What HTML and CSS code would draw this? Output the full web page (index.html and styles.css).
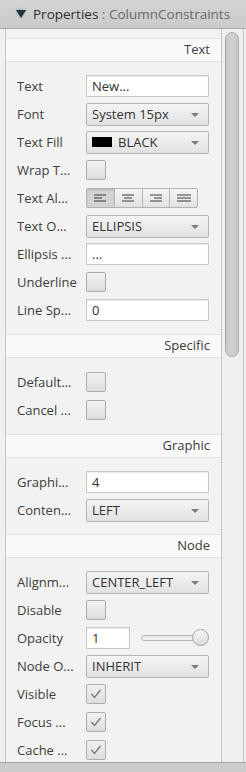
FILE: index.html
```html
<!DOCTYPE html>
<html>
<head>
<meta charset="utf-8">
<link rel="stylesheet" href="styles.css">
</head>
<body>
<div class="header">
  <svg class="tri" width="12" height="10" viewBox="0 0 12 10"><polygon points="1,1 11,1 6,9" fill="#2e2e2e"/></svg>
  <span class="title">Properties</span><span class="subtitle">&nbsp;: ColumnConstraints</span>
</div>
<div class="main">
  <div class="content">
    <div class="band">Text</div>
    <div class="body">
      <div class="row"><span class="lbl">Text</span><div class="field">New...</div></div>
      <div class="row"><span class="lbl">Font</span><div class="combo">System 15px<i class="arrow"></i></div></div>
      <div class="row"><span class="lbl">Text Fill</span><div class="combo"><span class="swatch"></span>BLACK<i class="arrow"></i></div></div>
      <div class="row"><span class="lbl">Wrap T...</span><div class="check"></div></div>
      <div class="row"><span class="lbl">Text Al...</span>
        <div class="seg">
          <div class="segbtn on"><svg width="12" height="8" viewBox="0 0 12 8"><path d="M0 1H12M0 4H8M0 7H12" stroke="#3a3a3a" stroke-width="1.1"/></svg></div>
          <div class="segbtn"><svg width="12" height="8" viewBox="0 0 12 8"><path d="M0 1H12M2 4H10M0 7H12" stroke="#3a3a3a" stroke-width="1.1"/></svg></div>
          <div class="segbtn"><svg width="12" height="8" viewBox="0 0 12 8"><path d="M0 1H12M4 4H12M0 7H12" stroke="#3a3a3a" stroke-width="1.1"/></svg></div>
          <div class="segbtn"><svg width="14" height="8" viewBox="0 0 14 8"><path d="M0 1H14M0 4H14M0 7H14" stroke="#3a3a3a" stroke-width="1.2"/></svg></div>
        </div>
      </div>
      <div class="row"><span class="lbl">Text O...</span><div class="combo">ELLIPSIS<i class="arrow"></i></div></div>
      <div class="row"><span class="lbl">Ellipsis ...</span><div class="field">...</div></div>
      <div class="row"><span class="lbl">Underline</span><div class="check"></div></div>
      <div class="row"><span class="lbl">Line Sp...</span><div class="field">0</div></div>
    </div>
    <div class="band">Specific</div>
    <div class="body">
      <div class="row"><span class="lbl">Default...</span><div class="check"></div></div>
      <div class="row"><span class="lbl">Cancel ...</span><div class="check"></div></div>
    </div>
    <div class="band">Graphic</div>
    <div class="body">
      <div class="row"><span class="lbl">Graphi...</span><div class="field">4</div></div>
      <div class="row"><span class="lbl">Conten...</span><div class="combo">LEFT<i class="arrow"></i></div></div>
    </div>
    <div class="band">Node</div>
    <div class="body">
      <div class="row"><span class="lbl">Alignm...</span><div class="combo">CENTER_LEFT<i class="arrow"></i></div></div>
      <div class="row"><span class="lbl">Disable</span><div class="check"></div></div>
      <div class="row"><span class="lbl">Opacity</span>
        <div class="opacity"><div class="field small">1</div><div class="slider"><div class="track"></div><div class="knob"></div></div></div>
      </div>
      <div class="row"><span class="lbl">Node O...</span><div class="combo">INHERIT<i class="arrow"></i></div></div>
      <div class="row"><span class="lbl">Visible</span><div class="check"><svg width="18" height="18" viewBox="0 0 18 18"><polyline points="4.5,9 7.5,12.5 13.5,5" fill="none" stroke="#7a7a7a" stroke-width="1.4"/></svg></div></div>
      <div class="row"><span class="lbl">Focus ...</span><div class="check"><svg width="18" height="18" viewBox="0 0 18 18"><polyline points="4.5,9 7.5,12.5 13.5,5" fill="none" stroke="#7a7a7a" stroke-width="1.4"/></svg></div></div>
      <div class="row"><span class="lbl">Cache ...</span><div class="check"><svg width="18" height="18" viewBox="0 0 18 18"><polyline points="4.5,9 7.5,12.5 13.5,5" fill="none" stroke="#7a7a7a" stroke-width="1.4"/></svg></div></div>
    </div>
  </div>
  <div class="scrollbar"><div class="thumb"></div></div>
</div>
<div class="footer"></div>
</body>
</html>
```
FILE: styles.css
```css
* { box-sizing: border-box; }
html, body { margin: 0; padding: 0; }
body {
  width: 246px;
  height: 772px;
  overflow: hidden;
  background: #f0f0f0;
  font-family: "Open Sans", "Liberation Sans", sans-serif;
  font-size: 13px;
  color: #3d3d3d;
}
.header {
  height: 29px;
  background: linear-gradient(#d3d3d3, #cbcbcb);
  border-bottom: 1px solid #a9a9a9;
  display: flex;
  align-items: center;
  padding-left: 15px;
  font-size: 13.5px;
  white-space: nowrap;
}
.tri { margin-right: 6px; filter: drop-shadow(0 0 1.5px #4fa8d8); }
.title { color: #2e2e2e; }
.subtitle { color: #6a6a6a; }
.main {
  display: flex;
  height: 733px;
  padding-left: 5px;
}
.content {
  width: 216px;
  border-left: 1px solid #c4c4c4;
  background: #f2f2f2;
  padding-top: 9px;
  overflow: hidden;
}
.band {
  height: 24px;
  background: #f9f9f9;
  border-top: 1px solid #e2e2e2;
  border-bottom: 1px solid #e2e2e2;
  text-align: right;
  padding-right: 11px;
  line-height: 21px;
  color: #3d3d3d;
}
.body { padding: 10px 0; }
.row {
  height: 28px;
  display: grid;
  grid-template-columns: 69px 123px;
  align-items: center;
  padding-left: 11px;
}
.lbl { white-space: nowrap; overflow: hidden; }
.field {
  height: 22px;
  background: #fff;
  border: 1px solid #c6c6c6;
  box-shadow: inset 0 1px 1px #ececec;
  padding-left: 5px;
  line-height: 20px;
  color: #333;
}
.field.small { width: 44px; }
.combo {
  position: relative;
  height: 23px;
  background: linear-gradient(#f4f4f4, #e2e2e2);
  border: 1px solid #b4b4b4;
  border-radius: 2px;
  padding-left: 5px;
  line-height: 21px;
  color: #333;
  display: flex;
  align-items: center;
}
.arrow {
  position: absolute;
  right: 9px;
  top: 9px;
  width: 0;
  height: 0;
  border-left: 4px solid transparent;
  border-right: 4px solid transparent;
  border-top: 4px solid #7b7b7b;
}
.swatch {
  width: 20px;
  height: 10px;
  background: #000;
  margin-right: 6px;
}
.check {
  width: 20px;
  height: 20px;
  background: linear-gradient(#f1f1f1, #dedede);
  border: 1px solid #acacac;
  border-radius: 2px;
  display: flex;
  align-items: center;
  justify-content: center;
}
.seg {
  display: flex;
  width: 112px;
  height: 20px;
  border: 1px solid #b2b2b2;
  border-radius: 2px;
  overflow: hidden;
}
.segbtn {
  flex: 1;
  display: flex;
  align-items: center;
  justify-content: center;
  background: linear-gradient(#f4f4f4, #e2e2e2);
  border-left: 1px solid #b8b8b8;
}
.segbtn:first-child { border-left: none; }
.segbtn.on {
  background: #d3d3d3;
  box-shadow: inset 0 1px 2px #b8b8b8;
}
.opacity {
  display: flex;
  align-items: center;
  gap: 11px;
}
.slider {
  position: relative;
  width: 68px;
  height: 18px;
}
.track {
  position: absolute;
  left: 0;
  right: 6px;
  top: 6px;
  height: 6px;
  border: 1px solid #b9b9b9;
  border-radius: 3px;
  background: linear-gradient(#e2e2e2, #f6f6f6);
}
.knob {
  position: absolute;
  right: 0;
  top: 0;
  width: 17px;
  height: 17px;
  border-radius: 50%;
  border: 1px solid #a2a2a2;
  background: linear-gradient(#f6f6f6, #dcdcdc);
}
.scrollbar {
  width: 23px;
  border-left: 1px solid #c4c4c4;
  border-right: 1px solid #c4c4c4;
  background: #efefef;
  padding: 3px 0 0 3px;
}
.thumb {
  width: 14px;
  height: 325px;
  border-radius: 7px;
  background: linear-gradient(90deg, #c9c9c9, #d2d2d2, #c6c6c6);
  border: 1px solid #ababab;
}
.footer {
  height: 10px;
  border-top: 1px solid #a5a5a5;
  background: #cccccc;
}
```
